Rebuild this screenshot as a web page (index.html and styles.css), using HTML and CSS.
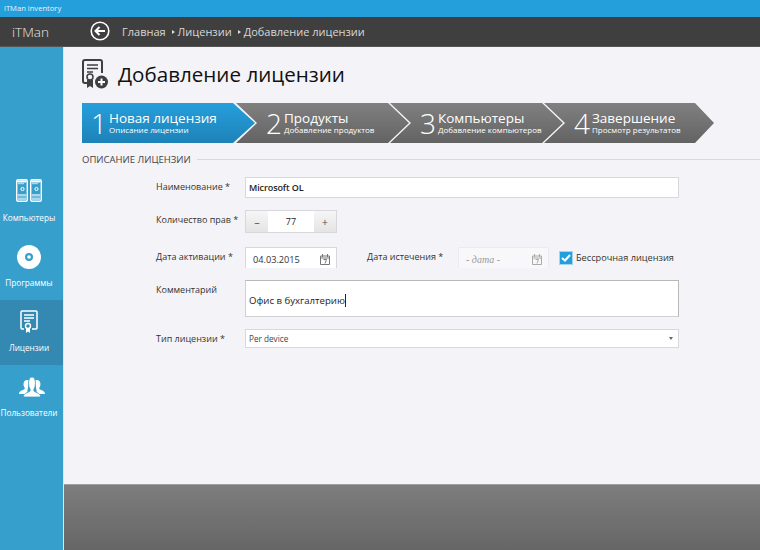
FILE: index.html
```html
<!doctype html>
<html lang="ru">
<head>
	<meta charset="UTF-8">
	<title>iTMan inventory</title>
	<link rel="stylesheet" href="styles.css">
</head>
<body>
	<div class="titleBar">iTMan inventory</div>
	<header class="topBar">
		<div class="brand">iTMan</div>
		<svg class="backIcon" width="20" height="20" viewBox="0 0 20 20">
			<circle cx="10" cy="10" r="8.8" fill="none" stroke="#fff" stroke-width="1.6"/>
			<path d="M15 10H6M9.5 6L5.5 10l4 4" fill="none" stroke="#fff" stroke-width="2"/>
		</svg>
		<nav class="crumbs">
			<span>Главная</span><i class="crumbArrow"></i><span>Лицензии</span><i class="crumbArrow"></i><span>Добавление лицензии</span>
		</nav>
	</header>
	<div class="layout">
		<aside class="sidebar">
			<div class="navItem">
				<svg width="28" height="28" viewBox="0 0 28 28">
					<g id="pcTower">
						<rect x="1.7" y="1.7" width="10.6" height="21.6" rx="1.500" fill="#379fcc" stroke="#fff" stroke-width="1.4"/>
						<rect x="2.5" y="2.500" width="9" height="2" fill="#fff"/>
						<rect x="3" y="5" width="6" height="1.200" fill="#a8d6ea"/>
						<circle cx="7.500" cy="11" r="1.600" fill="none" stroke="#fff"/>
						<rect x="2.500" y="16" width="9" height="2.500" fill="#a8d6ea"/>
						<rect x="2.500" y="19.500" width="9" height="2.500" fill="#a8d6ea"/>
					</g>
					<use href="#pcTower" x="14"/>
				</svg>
				<span>Компьютеры</span>
			</div>
			<div class="navItem">
				<svg width="24" height="24" viewBox="0 0 24 24">
					<circle cx="12" cy="12" r="12" fill="#fff"/>
					<circle cx="12" cy="12" r="4" fill="#379fcc"/>
					<circle cx="12" cy="12" r="1.8" fill="#fff"/>
				</svg>
				<span>Программы</span>
			</div>
			<div class="navItem active">
				<svg width="18" height="24" viewBox="0 0 18 24">
					<path d="M4 19H2a1 1 0 0 1-1-1V2a1 1 0 0 1 1-1h14a1 1 0 0 1 1 1v16a1 1 0 0 1-1 1h-4" fill="none" stroke="#fff" stroke-width="1.5"/>
					<path d="M4 5h10M4 8h10M4 11h6" stroke="#fff" stroke-width="1.4"/>
					<circle cx="8" cy="16" r="2.500" fill="none" stroke="#fff" stroke-width="1.4"/>
					<path d="M6 18v5l2-1.500 2 1.500v-5" fill="#fff"/>
				</svg>
				<span>Лицензии</span>
			</div>
			<div class="navItem">
				<svg class="usersIcon" width="26" height="20" viewBox="0 0 26 20">
					<path d="M0 17c0-3 3-3.500 5-4.500 1-.5 1-1.500 0-3-1-2-.5-6.500 3-6.500 1 0 1.500.3 2 .8L8 17z" fill="#fff"/>
					<path d="M26 17c0-3-3-3.500-5-4.500-1-.5-1-1.500 0-3 1-2 .5-6.500-3-6.500-1 0-1.500.3-2 .8L18 17z" fill="#fff"/>
					<path d="M4.500 20c0-4 4.500-4.500 6-5.500 1-.6 1-2 0-3.500-1.500-2.500-1.500-11 2.500-11s4 8.500 2.500 11c-1 1.500-1 2.900 0 3.500 1.500 1 6 1.500 6 5.500z" fill="#fff" stroke="#379fcc" stroke-width=".8"/>
				</svg>
				<span>Пользователи</span>
			</div>
		</aside>
		<div class="page">
			<main class="content">
				<div class="pageHead">
					<svg width="26" height="30" viewBox="0 0 26 30">
						<path d="M6 24H3a2 2 0 0 1-2-2V3a2 2 0 0 1 2-2h15a2 2 0 0 1 2 2v11" fill="none" stroke="#3f3f3f" stroke-width="2"/>
						<path d="M5 6h11M5 9.500h11M5 13h6" stroke="#3f3f3f" stroke-width="1.500"/>
						<circle cx="8" cy="18" r="3" fill="none" stroke="#3f3f3f" stroke-width="1.500"/>
						<path d="M5 21v8l3-2 3 2v-8z" fill="#3f3f3f"/>
						<circle cx="19.500" cy="23" r="6.500" fill="#3f3f3f"/>
						<path d="M19.500 19.500v7M16 23h7" stroke="#fff" stroke-width="2"/>
					</svg>
					<h1>Добавление лицензии</h1>
				</div>

				<div class="steps">
					<div class="step current">
						<b>1</b>
						<div><strong>Новая лицензия</strong><small>Описание лицензии</small></div>
					</div>
					<div class="step">
						<b>2</b>
						<div><strong>Продукты</strong><small>Добавление продуктов</small></div>
					</div>
					<div class="step">
						<b>3</b>
						<div><strong>Компьютеры</strong><small>Добавление компьютеров</small></div>
					</div>
					<div class="step">
						<b>4</b>
						<div><strong>Завершение</strong><small>Просмотр результатов</small></div>
					</div>
				</div>

				<div class="sectionTitle"><span>ОПИСАНИЕ ЛИЦЕНЗИИ</span></div>

				<form class="form">
					<div class="row nameRow">
						<label>Наименование *</label>
						<div class="field wide strong">Microsoft OL</div>
					</div>
					<div class="row countRow">
						<label>Количество прав *</label>
						<div class="stepper">
							<span class="stepBtn">–</span>
							<span class="stepValue">77</span>
							<span class="stepBtn">+</span>
						</div>
					</div>
					<div class="row dateRow">
						<label>Дата активации *</label>
						<div class="field date">
							04.03.2015
							<svg class="calIcon" width="10" height="11" viewBox="0 0 10 11">
								<path d="M.5 2h9v8.500h-9zM.5 4h9M2.500 0v3M7.500 0v3" fill="none" stroke="#777"/>
								<path d="M3.500 5.500h3L5 9.500" fill="none" stroke="#777"/>
							</svg>
						</div>
						<label class="endLabel">Дата истечения *</label>
						<div class="field date disabled">
							<em>- дата -</em>
							<svg class="calIcon" width="10" height="11" viewBox="0 0 10 11">
								<path d="M.5 2h9v8.500h-9zM.5 4h9M2.500 0v3M7.500 0v3" fill="none" stroke="#aaa"/>
								<path d="M3.500 5.500h3L5 9.500" fill="none" stroke="#aaa"/>
							</svg>
						</div>
						<span class="checkBox">
							<svg width="10" height="8" viewBox="0 0 10 8"><path d="M1 4l3 2.500L9 1" fill="none" stroke="#fff" stroke-width="2"/></svg>
						</span>
						<span class="checkLabel">Бессрочная лицензия</span>
					</div>
					<div class="row commentRow">
						<label>Комментарий</label>
						<div class="field wide comment"><span class="caret">Офис в бухгалтерию</span></div>
					</div>
					<div class="row typeRow">
						<label>Тип лицензии *</label>
						<div class="field wide select">Per device<i class="selectArrow"></i></div>
					</div>
				</form>
			</main>
			<footer class="footer"></footer>
		</div>
	</div>
</body>
</html>
```

FILE: styles.css
```css
* {
	box-sizing: border-box;
}
html, body {
	margin: 0;
	height: 100%;
	overflow: hidden;
}
body {
	display: flex;
	flex-direction: column;
	width: 760px;
	height: 550px;
	font-family: "Open Sans", "Noto Sans", sans-serif;
	color: #222;
	background: #f3f3f8;
}

.titleBar {
	height: 17px;
	line-height: 17px;
	padding-left: 4px;
	font-size: 7.6px;
	color: #e8f4fb;
	background: #259fdc;
}

.topBar {
	display: flex;
	align-items: center;
	height: 30px;
	color: #e6e6e6;
	background: #3f3f3f;
	border-bottom: 1px solid #555;
}
.brand {
	width: 90px;
	padding-left: 12px;
	font-size: 13.5px;
	font-weight: 300;
}
.backIcon {
	margin-right: 12px;
	margin-top: -2px;
}
.crumbs {
	display: flex;
	align-items: center;
	font-size: 11px;
	color: #d8d8d8;
}
.crumbArrow {
	width: 0;
	height: 0;
	margin: 0 3px 0 6px;
	border-left: 3px solid #ddd;
	border-top: 2.5px solid transparent;
	border-bottom: 2.5px solid transparent;
}

.layout {
	flex: 1;
	display: flex;
	min-height: 0;
}

/* Left nav */
.sidebar {
	width: 63px;
	padding-top: 123px;
	background: #379fcc;
}
.navItem {
	display: flex;
	flex-direction: column;
	align-items: center;
	height: 65px;
	padding: 8px 5px 0 0;
	font-size: 8.2px;
	color: #fff;
	white-space: nowrap;
}
.navItem svg {
	height: 28px;
}
.navItem .usersIcon {
	margin-left: 5px;
}
.navItem span {
	margin-top: 6px;
}
.navItem.active {
	background: #3389b1;
}

.page {
	flex: 1;
	display: flex;
	flex-direction: column;
	min-width: 0;
	border-left: 1px solid #e4e4ea;
}
.content {
	flex: 1;
	padding: 9px 0 0 18px;
}
.footer {
	height: 66px;
	background: linear-gradient(#7d7d7d, #666);
	border-top: 1px solid #a0a0a0;
}

.pageHead {
	display: flex;
	align-items: center;
	gap: 10px;
	height: 36px;
}
h1 {
	margin: 0;
	font-size: 20.6px;
	font-weight: 400;
	color: #111;
}

/* Wizard chevrons */
.steps {
	display: flex;
	height: 40px;
	margin-top: 11px;
}
.step {
	display: flex;
	align-items: center;
	width: 173px;
	margin-right: -19px;
	padding-left: 30px;
	color: #fff;
	background: linear-gradient(#808080, #636363);
	clip-path: polygon(0 0, calc(100% - 21px) 0, 100% 50%, calc(100% - 21px) 100%, 0 100%, 21px 50%);
}
.step:last-child {
	width: 170px;
	margin-right: 0;
	clip-path: polygon(0 0, calc(100% - 19px) 0, 100% 50%, calc(100% - 19px) 100%, 0 100%, 21px 50%);
}
.step.current {
	padding-left: 9px;
	background: linear-gradient(#259fdc, #1e82b8);
	clip-path: polygon(0 0, calc(100% - 22px) 0, 100% 50%, calc(100% - 22px) 100%, 0 100%);
}
.step b {
	margin-right: 2px;
	font-size: 28px;
	font-weight: 300;
	line-height: 1;
}
.step strong {
	display: block;
	font-size: 13.5px;
	font-weight: 400;
	line-height: 14px;
	white-space: nowrap;
}
.step small {
	display: block;
	font-size: 8px;
	line-height: 10px;
	white-space: nowrap;
}

.sectionTitle {
	display: flex;
	align-items: center;
	gap: 6px;
	height: 16px;
	margin-top: 8px;
	font-size: 9.5px;
	color: #444;
}
.sectionTitle::after {
	content: "";
	flex: 1;
	height: 1px;
	background: #d8d8de;
}

/* Form */
.form {
	padding: 10px 0 0 74px;
	font-size: 9px;
}
.row {
	display: flex;
	align-items: flex-start;
}
.row label {
	width: 89px;
	flex: none;
	padding-top: 3px;
	color: #333;
	white-space: nowrap;
}
.field {
	position: relative;
	background: #fff;
	border: 1px solid #d8d8dc;
}
.field.wide {
	width: 434px;
}
.strong {
	height: 21px;
	line-height: 19px;
	padding-left: 3px;
	font-size: 9px;
	font-weight: 600;
	letter-spacing: -.1px;
	color: #222;
}
.countRow {
	margin-top: 12px;
}
.stepper {
	display: flex;
	width: 92px;
	height: 23px;
	line-height: 21px;
	border: 1px solid #d8d8dc;
	background: #fff;
	text-align: center;
}
.stepBtn {
	width: 22px;
	color: #555;
	font-size: 11px;
	background: linear-gradient(#f6f6f6, #e4e4e4);
}
.stepValue {
	flex: 1;
}
.dateRow {
	margin-top: 14px;
	height: 21px;
}
.date {
	display: flex;
	align-items: center;
	justify-content: space-between;
	width: 92px;
	height: 21px;
	padding: 2px 6px 0 7px;
	border-bottom: none;
	font-size: 9.2px;
	color: #333;
}
.row .endLabel {
	width: 91px;
	margin-left: 30px;
}
.disabled {
	width: 91px;
	background: #f8f8fb;
	border-color: #ececf0;
	color: #999;
}
.disabled em {
	font-family: "Liberation Serif", serif;
	font-size: 10px;
}
.calIcon {
	flex: none;
}
.checkBox {
	display: flex;
	align-items: center;
	justify-content: center;
	width: 14px;
	height: 14px;
	margin: 4px 3px 0 10px;
	background: #259fdc;
	border: 1px solid #a6d4ec;
}
.checkLabel {
	padding-top: 4px;
	font-size: 9.2px;
	white-space: nowrap;
	color: #333;
}
.commentRow {
	margin-top: 12px;
}
.comment {
	height: 37px;
	padding: 13px 3px 0;
	font-size: 9.6px;
	border-color: #b8b8b8 #b8b8b8 #d0d0d4 #d0d0d4;
	color: #222;
}
.caret {
	border-right: 1px solid #222;
}
.typeRow {
	margin-top: 12px;
}
.select {
	height: 19px;
	line-height: 17px;
	padding-left: 3px;
	font-size: 8.2px;
	color: #444;
}
.selectArrow {
	position: absolute;
	right: 5px;
	top: 7px;
	border-top: 3px solid #666;
	border-left: 2.500px solid transparent;
	border-right: 2.500px solid transparent;
}
```
